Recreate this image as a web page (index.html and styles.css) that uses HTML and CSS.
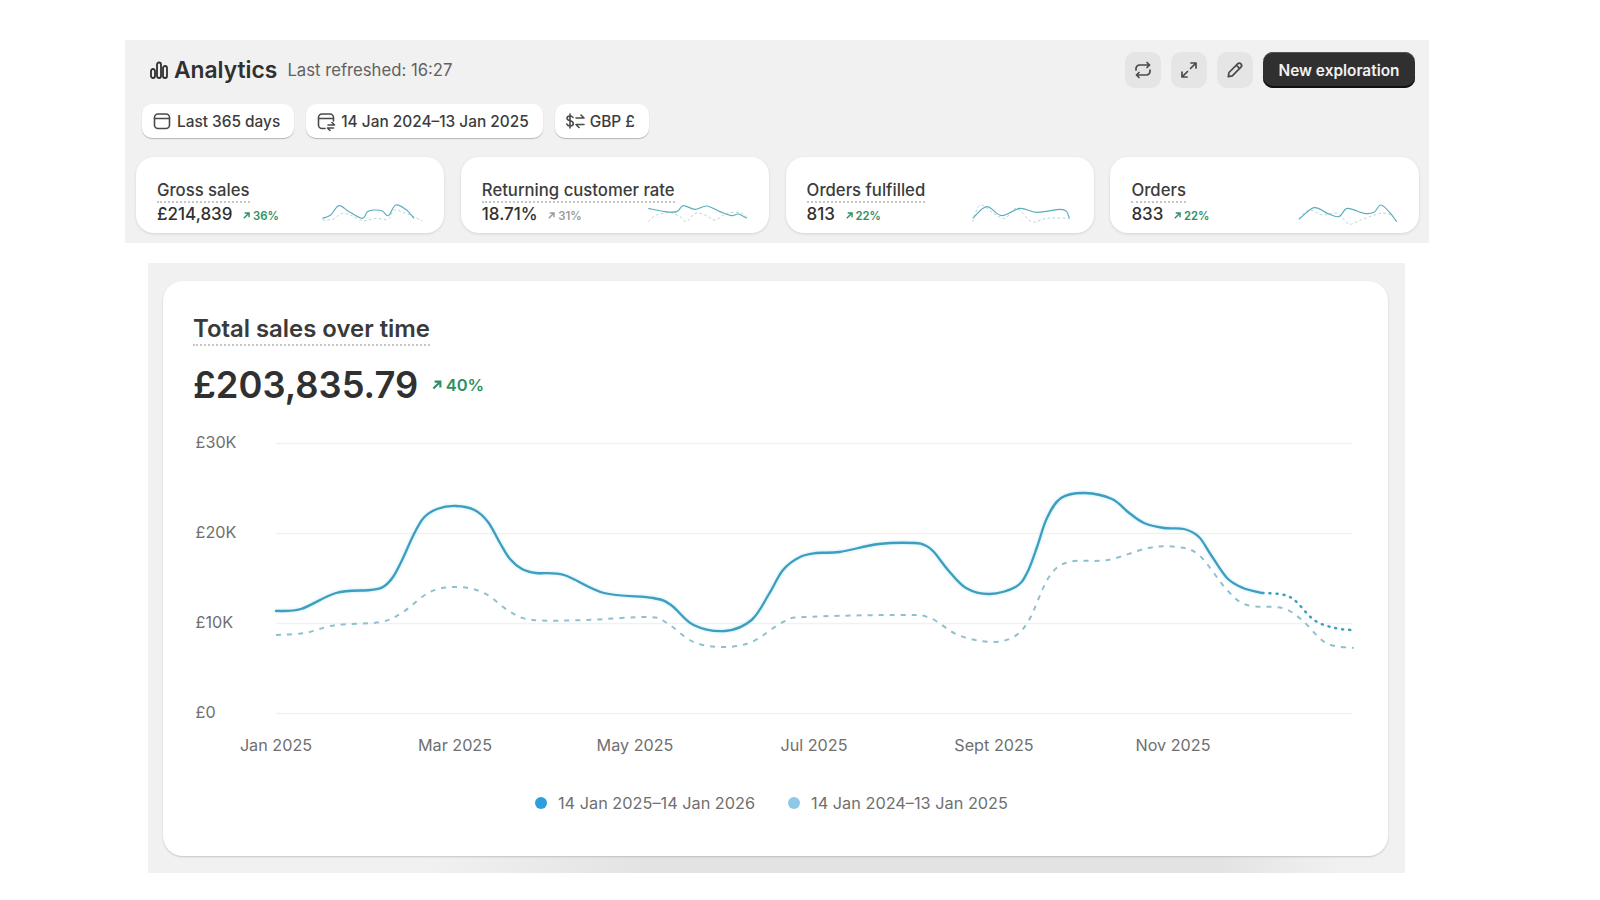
FILE: index.html
```html
<!DOCTYPE html>
<html lang="en">
<head>
<meta charset="utf-8">
<title>Analytics</title>
<link rel="stylesheet" href="styles.css">
</head>
<body>
<main class="page">
  <section class="top-panel">
    <header class="head">
      <svg class="head-icon" viewBox="0 0 18 18" aria-hidden="true"><rect x="1" y="8" width="4" height="9" rx="2"/><rect x="7" y="1.5" width="4" height="15.5" rx="2"/><rect x="13" y="5" width="4" height="12" rx="2"/></svg>
      <h1 class="head-title">Analytics</h1>
      <span class="head-note">Last refreshed: 16:27</span>
      <div class="head-actions">
        <button class="icon-btn"><svg viewBox="0 0 20 20"><path d="M14 2.5l2.6 2.5L14 7.5M16.4 5H6.5A3.5 3.5 0 0 0 3 8.5V10M6 17.5L3.4 15 6 12.5M3.6 15h9.9a3.5 3.5 0 0 0 3.5-3.5V10"/></svg></button>
        <button class="icon-btn"><svg viewBox="0 0 20 20"><path d="M12 3h5v5M17 3l-5.500 5.500M8 17H3v-5M3 17l5.500-5.500"/></svg></button>
        <button class="icon-btn"><svg viewBox="0 0 20 20"><path d="M4 12.500L12.600 3.900a2.300 2.300 0 0 1 3.300 3.300L7.300 15.800 3.300 16.700zM11.300 5.200l3.400 3.400"/></svg></button>
        <button class="primary-btn">New exploration</button>
      </div>
    </header>
    <div class="pills">
      <span class="pill"><svg viewBox="0 0 20 20"><rect x="2.500" y="3" width="15" height="14.500" rx="3.500"/><path d="M2.500 7.500h15"/></svg>Last 365 days</span>
      <span class="pill"><svg viewBox="0 0 20 20"><path d="M9 17.500H6A3.500 3.500 0 0 1 2.500 14V6.500A3.500 3.500 0 0 1 6 3h8a3.500 3.500 0 0 1 3.500 3.500V10M2.500 7.500h15M12 14h6.500M16 11.500l2.500 2.500M11.500 17h6M14 19.500L11.500 17"/></svg>14 Jan 2024–13 Jan 2025</span>
      <span class="pill"><svg class="fx" viewBox="0 0 20 20"><path d="M8 6.500C7.500 5.500 6.500 5 5 5 3.300 5 2 5.800 2 7.300c0 3.400 6.300 1.700 6.300 5.200C8.300 14 7 15 5.200 15 3.500 15 2.300 14.300 1.800 13M5 3v14M11 7h8M16 4l3 3M11 13.500h8M14 16.500l-3-3"/></svg>GBP £</span>
    </div>
    <div class="metrics">
      <article class="metric">
        <div class="metric-text">
          <h2 class="metric-name">Gross sales</h2>
          <p class="metric-value">£214,839 <span class="delta"><svg viewBox="0 0 10 10"><path d="M2 8l5.500-5.500M3 2.200h4.800V7"/></svg>36%</span></p>
        </div>
        <svg class="spark" viewBox="60 150 320 84"><path class="spark-old" data-points="70,210 100,208 130,190 160,198 195,212 230,205 268,208 285,180 320,190 345,200 370,213"/><path class="spark-now" data-points="70,205 95,195 120,167 150,185 190,205 205,185 225,180 250,183 268,197 290,165 320,178 345,205"/></svg>
      </article>
      <article class="metric">
        <div class="metric-text">
          <h2 class="metric-name">Returning customer rate</h2>
          <p class="metric-value">18.71% <span class="delta delta-muted"><svg viewBox="0 0 10 10"><path d="M2 8l5.500-5.500M3 2.200h4.800V7"/></svg>31%</span></p>
        </div>
        <svg class="spark" viewBox="1032 150 320 84"><path class="spark-old" data-points="1045,215 1070,195 1110,188 1140,200 1160,215 1185,190 1215,195 1245,210 1280,190 1320,188 1345,205"/><path class="spark-now" data-points="1045,175 1095,185 1130,185 1150,167 1185,178 1220,168 1260,185 1295,197 1315,192 1340,205"/></svg>
      </article>
      <article class="metric">
        <div class="metric-text">
          <h2 class="metric-name">Orders fulfilled</h2>
          <p class="metric-value">813 <span class="delta"><svg viewBox="0 0 10 10"><path d="M2 8l5.500-5.500M3 2.200h4.800V7"/></svg>22%</span></p>
        </div>
        <svg class="spark" viewBox="57 150 320 84"><path class="spark-old" data-points="68,215 90,165 130,190 165,205 200,175 245,215 290,205 350,205 362,210"/><path class="spark-now" data-points="68,205 110,170 155,197 210,175 260,187 330,178 350,185 358,205"/></svg>
      </article>
      <article class="metric">
        <div class="metric-text">
          <h2 class="metric-name">Orders</h2>
          <p class="metric-value">833 <span class="delta"><svg viewBox="0 0 10 10"><path d="M2 8l5.500-5.500M3 2.200h4.800V7"/></svg>22%</span></p>
        </div>
        <svg class="spark" viewBox="1030 150 320 84"><path class="spark-old" data-points="1045,205 1075,180 1115,195 1160,190 1195,222 1230,210 1290,190 1320,195 1338,215"/><path class="spark-now" data-points="1045,208 1090,173 1130,190 1165,200 1190,175 1240,190 1270,187 1290,165 1315,185 1338,215"/></svg>
      </article>
    </div>
  </section>

  <section class="chart-panel">
    <div class="chart-card">
      <h2 class="chart-title">Total sales over time</h2>
      <div class="chart-total"><span class="total-value">£203,835.79</span><span class="total-delta"><svg viewBox="0 0 10 10"><path d="M2 8l5.500-5.500M3 2.200h4.800V7"/></svg>40%</span></div>
      <svg class="chart" viewBox="163 425 1225 366">
        <g class="grid"><path d="M276 443.500H1352"/><path d="M276 533.500H1352"/><path d="M276 623.500H1352"/><path d="M276 713.500H1352"/></g>
        <g class="y-labels"><text x="195.500" y="447.500">£30K</text><text x="195.500" y="537.500">£20K</text><text x="195.500" y="628">£10K</text><text x="195.500" y="718">£0</text></g>
        <g class="x-labels"><text x="276" y="751">Jan 2025</text><text x="455" y="751">Mar 2025</text><text x="635" y="751">May 2025</text><text x="814" y="751">Jul 2025</text><text x="994" y="751">Sept 2025</text><text x="1173" y="751">Nov 2025</text></g>
        <path class="line-old" data-points="276,635 305,633 336,625 381,622 403,612 430,592 457,587 484,593 510.500,612 533,620 586,620 649,617 667,623 693.600,642 722.600,647 751.600,642 783,622 805,617 903,615 930,618 958,635 990,642 1013.500,637 1029,620 1049,577 1069,562 1108,560 1148,548 1176,547 1199,555 1227,590 1247,605 1282,608 1302,620 1326,643 1353.600,648"/>
        <path class="line-now-end" data-points="1262.600,593 1290,597 1314,620 1335,628 1351.600,630"/>
        <path class="line-now" data-points="276,611 301,609 336,593 370,590 383,587 393,577 403,558 413,536 423.500,518 437,509 456,506 474.500,510 488,522 500,543 510,559 522,569 536,573 564,575 604,593 653,598 671,605 693.600,625 725,631 751.600,620 769,594 783,570 800,557 816,553 839.500,552 879,544 915,543 926.500,546 934,552 948,570 966,588 990,594 1015.500,587 1027,573 1037,547 1047,518 1061,498 1085,493 1112,499 1128,512 1144,523 1164,528 1184,529 1199,537 1211,555 1227,578 1243,588 1262.600,593"/>
      </svg>
      <div class="legend">
        <span class="legend-item"><i class="dot dot-now"></i>14 Jan 2025–14 Jan 2026</span>
        <span class="legend-item"><i class="dot dot-old"></i>14 Jan 2024–13 Jan 2025</span>
      </div>
    </div>
  </section>
</main>
<script src="chart.js"></script>
</body>
</html>
```

FILE: styles.css
```css
* { box-sizing: border-box; }
html, body { margin: 0; padding: 0; background: #fff; }
body { font-family: Inter, "Liberation Sans", sans-serif; color: #303030; }
h1, h2, p { margin: 0; }
button { font-family: inherit; border: 0; padding: 0; }

.page { width: 1304px; margin-left: 125px; padding-top: 40px; }

.top-panel { background: #f1f1f1; height: 203px; padding: 12px 11px 10px; }
.head { display: flex; align-items: center; height: 36px; padding-left: 14px; }
.head-icon { width: 18px; height: 18px; margin-right: 6px; fill: none; stroke: #303030; stroke-width: 1.8; }
.head-title { font-size: 22.800px; font-weight: 600; line-height: 28px; margin-right: 10px; color: #303030; }
.head-note { font-size: 16.700px; color: #616161; }
.head-actions { margin-left: auto; display: flex; align-items: center; gap: 10px; padding-right: 3px; }
.icon-btn { width: 36px; height: 36px; border-radius: 10px; background: #e5e5e5; display: flex; align-items: center; justify-content: center; }
.icon-btn svg { width: 20px; height: 20px; fill: none; stroke: #4a4a4a; stroke-width: 1.7; stroke-linecap: round; stroke-linejoin: round; }
.primary-btn { width: 152px; height: 36px; border-radius: 10px; background: #303030; color: #f2f2f2; font-size: 15.400px; font-weight: 600; box-shadow: inset 0 -2px 0 #111, inset 0 1px 0 #555; }

.pills { display: flex; gap: 12px; margin-top: 16px; padding-left: 6px; }
.pill { height: 34px; display: flex; align-items: center; gap: 5px; padding: 0 14px 0 10px; background: #fff; border-radius: 10px; font-size: 15.400px; font-weight: 500; color: #3c3c3c; box-shadow: 0 1px 1px #b5b5b5; white-space: nowrap; }
.pill svg { width: 20px; height: 20px; fill: none; stroke: #4a4a4a; stroke-width: 1.6; stroke-linecap: round; stroke-linejoin: round; }

.metrics { display: grid; grid-template-columns: repeat(4, 308.300px); column-gap: 16.500px; margin-top: 19px; }
.metric { height: 76px; background: #fff; border-radius: 18px; box-shadow: 0 1px 3px rgba(0,0,0,.12); padding: 23px 18px 0 21px; display: flex; justify-content: space-between; position: relative; }
.metric-name { display: table; font-size: 16.700px; font-weight: 500; line-height: 20px; color: #3c3c3c; border-bottom: 2px dotted #c6c6c6; padding-bottom: 1px; white-space: nowrap; }
.metric-value { font-size: 17px; font-weight: 500; line-height: 22px; color: #303030; white-space: nowrap; }
.delta { font-size: 11.300px; font-weight: 600; color: #2f8f63; margin-left: 5px; }
.delta svg { width: 9px; height: 9px; margin-right: 2px; fill: none; stroke: currentColor; stroke-width: 1.600; }
.delta-muted { color: #9a9a9a; }
.spark { position: absolute; right: 18.500px; top: 43px; width: 106.670px; height: 28px; fill: none; }
.spark-now { stroke: #5aaebb; stroke-width: 3.500; }
.spark-old { stroke: #a9cbd2; stroke-width: 2.500; stroke-dasharray: 8 7; }

.chart-panel { width: 1256.500px; margin: 19.500px 0 0 23px; height: 610px; padding: 18.500px 17px 17px 15px; background: linear-gradient(90deg, #f1f1f1 22%, #e3e3e3 40%, #e3e3e3 85%, #f1f1f1 95%) bottom / 100% 17px no-repeat, #f1f1f1; }
.chart-card { height: 575px; background: #fff; border-radius: 20px; box-shadow: 0 1px 2px rgba(0,0,0,.18); padding: 33px 0 0; }
.chart-title { display: table; margin-left: 30px; font-size: 23.900px; font-weight: 600; line-height: 30px; color: #3a3a3a; border-bottom: 2px dotted #c6c6c6; }
.chart-total { display: flex; align-items: center; margin: 16px 0 0 30px; height: 46px; }
.total-value { font-size: 36.300px; font-weight: 600; color: #303030; }
.total-delta { margin-left: 12.500px; font-size: 16.500px; font-weight: 600; color: #2f8f63; display: flex; align-items: center; gap: 3px; }
.total-delta svg { width: 12px; height: 12px; fill: none; stroke: currentColor; stroke-width: 1.800; }
.chart { display: block; width: 1225px; height: 366px; margin-top: 17px; fill: none; }
.grid path { stroke: #f1f1f1; stroke-width: 1.500; }
.y-labels text, .x-labels text { fill: #6f6f6f; font-size: 16.200px; font-family: Inter, "Liberation Sans", sans-serif; }
.x-labels text { text-anchor: middle; }
.line-now { stroke: #3f9dbf; stroke-width: 2.300; stroke-linecap: round; filter: drop-shadow(0 0 1.500px rgba(120, 215, 240, .55)); }
.line-now-end { stroke: #3f9dbf; stroke-width: 2.500; stroke-dasharray: 1 6; stroke-linecap: round; }
.line-old { stroke: #8fc0cf; stroke-width: 2; stroke-dasharray: 5 6; }
.legend { display: flex; align-items: center; margin: 0 0 0 372px; gap: 33px; height: 24px; }
.legend-item { display: flex; align-items: center; gap: 11px; font-size: 16.300px; color: #6f6f6f; }
.dot { width: 12px; height: 12px; border-radius: 50%; display: block; }
.dot-now { background: #2d9fdc; }
.dot-old { background: #8ec8e4; }
```

FILE: chart.js
```js
// Draw each data-points series as a smooth Catmull-Rom curve.
document.querySelectorAll('[data-points]').forEach(function (el) {
  var p = el.getAttribute('data-points').trim().split(/\s+/).map(function (s) {
    return s.split(',').map(Number);
  });
  var d = 'M' + p[0][0] + ' ' + p[0][1];
  for (var i = 0; i < p.length - 1; i++) {
    var a = p[i - 1] || p[i], b = p[i], c = p[i + 1], e = p[i + 2] || c;
    d += 'C' + (b[0] + (c[0] - a[0]) / 6).toFixed(1) + ' ' + (b[1] + (c[1] - a[1]) / 6).toFixed(1) +
      ' ' + (c[0] - (e[0] - b[0]) / 6).toFixed(1) + ' ' + (c[1] - (e[1] - b[1]) / 6).toFixed(1) +
      ' ' + c[0] + ' ' + c[1];
  }
  el.setAttribute('d', d);
});
```
